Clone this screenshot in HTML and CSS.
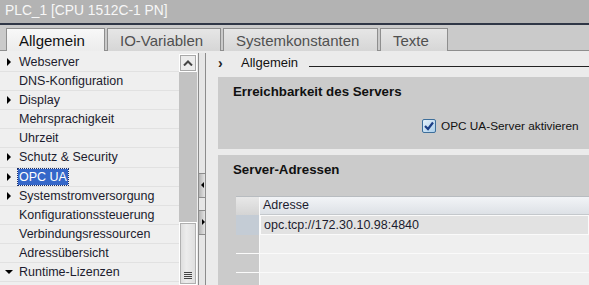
FILE: index.html
```html
<!DOCTYPE html>
<html lang="de">
<head>
    <meta charset="UTF-8">
    <title>PLC_1 Eigenschaften</title>
    <link rel="stylesheet" href="styles.css">
</head>
<body>
    <div class="titlebar">PLC_1 [CPU 1512C-1 PN]</div>

    <div class="tabs">
        <div class="tab active tab-general">Allgemein</div>
        <div class="tab tab-io">IO-Variablen</div>
        <div class="tab tab-const">Systemkonstanten</div>
        <div class="tab tab-texts">Texte</div>
    </div>

    <div class="main">
        <ul class="tree">
            <li class="node closed">Webserver</li>
            <li>DNS-Konfiguration</li>
            <li class="node closed">Display</li>
            <li>Mehrsprachigkeit</li>
            <li>Uhrzeit</li>
            <li class="node closed">Schutz &amp; Security</li>
            <li class="node closed"><span class="selected">OPC UA</span></li>
            <li class="node closed">Systemstromversorgung</li>
            <li>Konfigurationssteuerung</li>
            <li>Verbindungsressourcen</li>
            <li>Adressübersicht</li>
            <li class="node open">Runtime-Lizenzen</li>
        </ul>

        <div class="scrollbar">
            <div class="scroll-up">
                <svg width="10" height="6" viewBox="0 0 10 6"><path d="M1 5.5 L5 1.5 L9 5.5" fill="none" stroke="#444" stroke-width="2"/></svg>
            </div>
            <div class="scroll-track"></div>
            <div class="scroll-thumb">
                <div class="grip"></div>
            </div>
        </div>

        <div class="splitter">
            <div class="split-btn btn-left"></div>
            <div class="split-btn btn-right"></div>
        </div>

        <div class="content">
            <div class="section-head">
                <span class="chevron">›</span>
                <span class="section-title">Allgemein</span>
                <span class="section-line"></span>
            </div>

            <div class="box box-reach">
                <h3>Erreichbarkeit des Servers</h3>
                <label class="check-row">
                    <svg class="checkbox" width="14" height="14" viewBox="0 0 14 14">
                        <defs>
                            <linearGradient id="cbg" x1="0" y1="0" x2="1" y2="1">
                                <stop offset="0" stop-color="#e6f2fb"/>
                                <stop offset="1" stop-color="#a9cdea"/>
                            </linearGradient>
                        </defs>
                        <rect x="0.5" y="0.5" width="13" height="13" rx="1.5" fill="url(#cbg)" stroke="#3d6e9a"/>
                        <path d="M3 7 L6 10 L11 3.5" fill="none" stroke="#1d3f86" stroke-width="2.2"/>
                    </svg>
                    OPC UA-Server aktivieren
                </label>
            </div>

            <div class="box box-addr">
                <h3>Server-Adressen</h3>
                <div class="grid">
                    <div class="grid-row grid-head">
                        <div class="rh"></div>
                        <div class="cell">Adresse</div>
                    </div>
                    <div class="grid-row grid-data">
                        <div class="rh"></div>
                        <div class="cell">opc.tcp://172.30.10.98:4840</div>
                    </div>
                    <div class="grid-row grid-empty">
                        <div class="rh"></div>
                        <div class="cell"></div>
                    </div>
                    <div class="grid-row grid-empty">
                        <div class="rh"></div>
                        <div class="cell"></div>
                    </div>
                    <div class="grid-row grid-empty">
                        <div class="rh"></div>
                        <div class="cell"></div>
                    </div>
                </div>
            </div>
        </div>
    </div>
</body>
</html>
```

FILE: styles.css
```css
body {
    margin: 0;
    width: 589px;
    height: 285px;
    overflow: hidden;
    font-family: "Liberation Sans", Arial, sans-serif;
    background-color: #ececec;
}
.titlebar {
    height: 23px;
    line-height: 22px;
    padding-left: 5px;
    background-color: #b3b3b3;
    color: #f7f7f7;
    font-size: 13.8px;
    border-bottom: 2px solid #2f3646;
}
.tabs {
    display: flex;
    gap: 2px;
    height: 22px;
    padding: 3px 0 0 6px;
    background-color: #cacaca;
    border-bottom: 1px solid #8e8e8e;
}
.tab {
    box-sizing: border-box;
    height: 23px;
    padding-left: 12px;
    line-height: 23px;
    font-size: 15px;
    color: #505050;
    border: 1px solid #8e8e8e;
    border-bottom: none;
    background: linear-gradient(#e6e6e6, #d6d6d6);
}
.tab.active {
    color: #111;
    background: linear-gradient(#f8f8f8, #ececec);
    position: relative;
    z-index: 1;
}
.tab-general { width: 99px; }
.tab-io { width: 114px; }
.tab-const { width: 155px; }
.tab-texts { width: 68px; }
.main {
    display: flex;
    height: 234px;
}
.tree {
    list-style: none;
    margin: 0;
    padding: 2px 0 0 0;
    width: 179px;
    background-color: #efefef;
}
.tree li {
    position: relative;
    box-sizing: border-box;
    height: 19.1px;
    line-height: 19px;
    padding-left: 19px;
    font-size: 12.5px;
    color: #1c1c2e;
    border-bottom: 1px solid #e1e1e1;
}
.tree li.node::before {
    content: "";
    position: absolute;
    top: 5px;
}
.tree li.closed::before {
    left: 7px;
    border-top: 4px solid transparent;
    border-bottom: 4px solid transparent;
    border-left: 4px solid #000;
}
.tree li.open::before {
    left: 5px;
    top: 7px;
    border-left: 4px solid transparent;
    border-right: 4px solid transparent;
    border-top: 4px solid #000;
}
.selected {
    display: inline-block;
    margin-left: -1px;
    padding: 0 1px;
    line-height: 16px;
    background-color: #3567c9;
    color: #fff;
    outline: 1px dotted #1b2e6a;
}
.scrollbar {
    display: flex;
    flex-direction: column;
    width: 18px;
    padding-top: 3px;
    background-color: #ececec;
}
.scroll-up {
    box-sizing: border-box;
    height: 18px;
    display: flex;
    align-items: center;
    justify-content: center;
    border: 1px solid #fff;
    box-shadow: inset 0 0 0 1px #a8a8a8;
    background-color: #ececec;
}
.scroll-track {
    flex: 1;
    background-color: #c2c2c2;
}
.scroll-thumb {
    box-sizing: border-box;
    height: 63px;
    display: flex;
    align-items: flex-end;
    justify-content: center;
    padding-bottom: 5px;
    border: 1px solid #fff;
    box-shadow: inset 0 0 0 1px #b0b0b0;
    background: linear-gradient(90deg, #dcdcdc, #ececec 40%, #dedede);
}
.grip {
    width: 8px;
    height: 7px;
    background: repeating-linear-gradient(#444 0 1px, transparent 1px 2px);
}
.splitter {
    box-sizing: border-box;
    width: 8px;
    margin: 2px 0 0 1px;
    border-left: 1px solid #8c8c8c;
    border-right: 1px solid #8c8c8c;
    background-color: #e6e6e6;
    padding-top: 120px;
}
.split-btn {
    position: relative;
    height: 23px;
    margin-bottom: 12px;
    border-top: 1px solid #8c8c8c;
    border-bottom: 1px solid #8c8c8c;
    background: linear-gradient(90deg, #b4b4b4, #e4e4e4);
}
.split-btn::after {
    content: "";
    position: absolute;
    top: 8px;
    border-top: 3px solid transparent;
    border-bottom: 3px solid transparent;
}
.btn-left::after {
    left: 2px;
    border-right: 3px solid #000;
}
.btn-right::after {
    left: 3px;
    border-left: 3px solid #000;
}
.content {
    flex: 1;
    padding-left: 12px;
    background-color: #ebebeb;
}
.section-head {
    display: flex;
    align-items: center;
    height: 26px;
}
.chevron {
    width: 23px;
    font-size: 14px;
    font-weight: bold;
    margin-top: -3px;
    color: #222;
}
.section-title {
    font-size: 13px;
    color: #111;
    margin-top: -3px;
}
.section-line {
    flex: 1;
    margin-left: 11px;
    margin-top: 5px;
    border-top: 1px solid #222;
}
.box {
    background-color: #cbcbcb;
    margin-bottom: 6px;
}
.box h3 {
    margin: 0;
    padding: 7px 0 0 15px;
    font-size: 13.3px;
    line-height: 15px;
    color: #111;
}
.box-reach {
    height: 72px;
}
.check-row {
    display: flex;
    align-items: center;
    gap: 5px;
    margin: 20px 0 0 204px;
    font-size: 11.8px;
    color: #111;
}
.box-addr {
    height: 140px;
}
.grid {
    margin: 19px 0 0 18px;
    border-top: 1px solid #b8bcc0;
}
.grid-row {
    display: flex;
    height: 19px;
}
.rh {
    width: 23px;
    border-right: 1px solid #fafafa;
}
.cell {
    flex: 1;
    padding-left: 3px;
    font-size: 12.5px;
    line-height: 17px;
    color: #1c1c2e;
}
.grid-head {
    height: 18px;
}
.grid-head .rh {
    background: linear-gradient(#e8e8e8, #d4d4d4);
}
.grid-head .cell {
    background: linear-gradient(#f2f4f7, #dde1e6);
    border-bottom: 1px solid #c4c8cc;
}
.grid-data {
    height: 20px;
}
.grid-data .rh {
    background-color: #c4ccd5;
}
.grid-data .cell {
    background-color: #e2e2e2;
    border: 1px solid #fafafa;
    line-height: 18px;
}
.grid-empty .rh {
    background-color: #cbcbcb;
    border-bottom: 1px solid #fafafa;
}
.grid-empty .cell {
    background-color: #efefef;
    border-bottom: 1px solid #fafafa;
}
```
